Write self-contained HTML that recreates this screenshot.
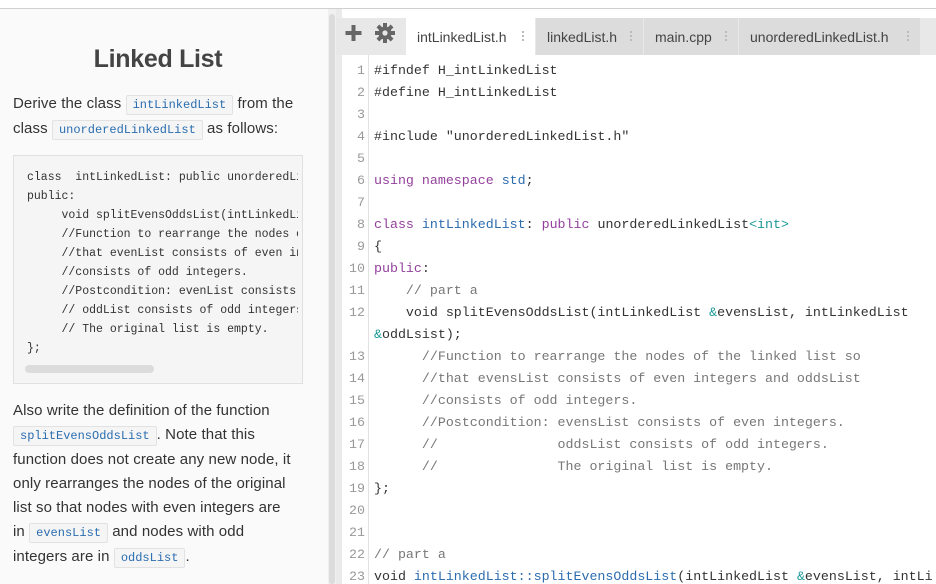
<!DOCTYPE html>
<html><head><meta charset="utf-8"><style>
*{margin:0;padding:0;box-sizing:border-box}
body{width:936px;height:584px;overflow:hidden;background:#fff;position:relative;font-family:"Liberation Sans",sans-serif}
.topline{position:absolute;left:0;top:8px;width:936px;height:1px;background:#cfcfcf}
.left{position:absolute;left:0;top:9px;width:328px;height:575px;background:#fafafa;overflow:hidden}
.sb{position:absolute;left:328px;top:9px;width:8px;height:575px;background:#f0f0f0}
.sbt{position:absolute;left:329px;top:14px;width:6px;height:570px;background:#dcdcdc;border-radius:3px}
h1{position:absolute;top:36px;left:0;width:316px;text-align:center;font-size:25px;font-weight:bold;color:#444;letter-spacing:-0.3px}
p{position:absolute;left:13px;width:320px;font-size:15px;line-height:24px;color:#333;white-space:nowrap;letter-spacing:0.1px}
code{font-family:"Liberation Mono",monospace;font-size:12px;color:#2a6db0;background:#f5f5f5;border:1px solid #e2e2e2;padding:2px 6px;border-radius:2px;letter-spacing:0}
pre{position:absolute;left:13px;top:155px;width:290px;height:229px;background:#f5f5f5;border:1px solid #e0e0e0;font-family:"Liberation Mono",monospace;font-size:11.5px;line-height:19px;color:#333;padding:12px 0 0 13px;overflow:hidden;white-space:pre}
pre div{width:271px;overflow:hidden}
.thumb{position:absolute;left:25px;top:365px;width:129px;height:8px;border-radius:4px;background:#dcdcdc}
.edge{position:absolute;left:336px;top:9px;width:6px;height:575px;background:#eaeaea}
.tabbar{position:absolute;left:336px;top:18px;width:600px;height:37px;background:#e8e8e8}
.tab{position:absolute;top:18px;height:37px;font-size:14px;color:#444;line-height:38px;padding-left:11px;background:#dcdcdc}
.tab.a{background:#fff}
.dots{position:absolute;top:13px;width:2px;height:11px;background:repeating-linear-gradient(#bbb 0 2px,transparent 2px 4px)}
.code{position:absolute;left:342px;top:55px;width:594px;height:529px;background:#fff;overflow:hidden}
.gut{position:absolute;left:26px;top:0;width:1px;height:529px;background:#e2e2e2}
.ln{position:absolute;left:0;width:23px;text-align:right;font-family:"Liberation Mono",monospace;font-size:13.3px;color:#999}
.cl{position:absolute;left:32px;font-family:"Liberation Mono",monospace;font-size:13.3px;color:#333;white-space:pre}
.k{color:#93409c}.t{color:#2c6cae}.c{color:#777}.g{color:#1a9999}
</style></head><body>
<div class="topline"></div>
<div class="left">
<h1>Linked List</h1>
</div>
<p style="top:92px">Derive the class <code>intLinkedList</code> from the<br>class <code>unorderedLinkedList</code> as follows:</p>
<pre><div>class  intLinkedList: public unorderedLinkedList&lt;int&gt;
public:
     void splitEvensOddsList(intLinkedList &amp;evensList
     //Function to rearrange the nodes of the linked
     //that evenList consists of even integers
     //consists of odd integers.
     //Postcondition: evenList consists of even
     // oddList consists of odd integers.
     // The original list is empty.
};</div></pre>
<div class="thumb"></div>
<p style="top:399px">Also write the definition of the function<br><code>splitEvensOddsList</code>. Note that this<br>function does not create any new node, it<br>only rearranges the nodes of the original<br>list so that nodes with even integers are<br>in <code>evensList</code> and nodes with odd<br>integers are in <code>oddsList</code>.</p>
<div class="sb"></div><div class="sbt"></div>
<div class="edge"></div>
<div class="tabbar"></div>
<svg style="position:absolute;left:345px;top:23px" width="60" height="22" viewBox="0 0 60 22">
<path d="M8.5 2v16M0.5 10h16" stroke="#666" stroke-width="4"/>
<g transform="translate(40,10)" fill="#666">
<circle r="6.5"/>
<g><rect x="-2" y="-10" width="4" height="20"/><rect x="-10" y="-2" width="20" height="4"/><rect x="-2" y="-10" width="4" height="20" transform="rotate(45)"/><rect x="-2" y="-10" width="4" height="20" transform="rotate(-45)"/></g>
<circle r="2.6" fill="#e8e8e8"/></g>
</svg>
<div class="tab a" style="left:406px;width:129px">intLinkedList.h<span class="dots" style="left:116px"></span></div>
<div class="tab" style="left:536px;width:107px">linkedList.h<span class="dots" style="left:94px"></span></div>
<div class="tab" style="left:644px;width:94px">main.cpp<span class="dots" style="left:81px"></span></div>
<div class="tab" style="left:739px;width:181px">unorderedLinkedList.h<span class="dots" style="left:168px"></span></div>
<div class="code">
<div class="gut"></div>
<div class="ln" style="top:8px">1</div><div class="cl" style="top:8px">#ifndef H_intLinkedList</div>
<div class="ln" style="top:30px">2</div><div class="cl" style="top:30px">#define H_intLinkedList</div>
<div class="ln" style="top:52px">3</div>
<div class="ln" style="top:74px">4</div><div class="cl" style="top:74px">#include "unorderedLinkedList.h"</div>
<div class="ln" style="top:96px">5</div>
<div class="ln" style="top:118px">6</div><div class="cl" style="top:118px"><span class="k">using namespace</span> <span class="t">std</span>;</div>
<div class="ln" style="top:140px">7</div>
<div class="ln" style="top:162px">8</div><div class="cl" style="top:162px"><span class="k">class</span> <span class="t">intLinkedList</span>: <span class="k">public</span> unorderedLinkedList<span class="g">&lt;int&gt;</span></div>
<div class="ln" style="top:184px">9</div><div class="cl" style="top:184px">{</div>
<div class="ln" style="top:206px">10</div><div class="cl" style="top:206px"><span class="k">public</span>:</div>
<div class="ln" style="top:228px">11</div><div class="cl c" style="top:228px">    // part a</div>
<div class="ln" style="top:250px">12</div><div class="cl" style="top:250px">    void splitEvensOddsList(intLinkedList <span class="g">&amp;</span>evensList, intLinkedList</div>
<div class="cl" style="top:272px"><span class="g">&amp;</span>oddLsist);</div>
<div class="ln" style="top:294px">13</div><div class="cl c" style="top:294px">      //Function to rearrange the nodes of the linked list so</div>
<div class="ln" style="top:316px">14</div><div class="cl c" style="top:316px">      //that evensList consists of even integers and oddsList</div>
<div class="ln" style="top:338px">15</div><div class="cl c" style="top:338px">      //consists of odd integers.</div>
<div class="ln" style="top:360px">16</div><div class="cl c" style="top:360px">      //Postcondition: evensList consists of even integers.</div>
<div class="ln" style="top:382px">17</div><div class="cl c" style="top:382px">      //               oddsList consists of odd integers.</div>
<div class="ln" style="top:404px">18</div><div class="cl c" style="top:404px">      //               The original list is empty.</div>
<div class="ln" style="top:426px">19</div><div class="cl" style="top:426px">};</div>
<div class="ln" style="top:448px">20</div>
<div class="ln" style="top:470px">21</div>
<div class="ln" style="top:492px">22</div><div class="cl c" style="top:492px">// part a</div>
<div class="ln" style="top:514px">23</div><div class="cl" style="top:514px">void <span class="t">intLinkedList::splitEvensOddsList</span>(intLinkedList <span class="g">&amp;</span>evensList, intLi</div>
</div>
</body></html>
